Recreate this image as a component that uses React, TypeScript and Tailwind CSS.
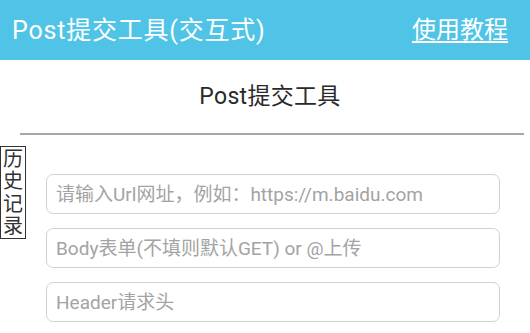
import React from 'react';

const fontStack = { fontFamily: 'Roboto, "Noto Sans CJK SC", sans-serif' };

export default function App() {
  const fields = [
    '请输入Url网址，例如：https://m.baidu.com',
    'Body表单(不填则默认GET) or @上传',
    'Header请求头',
  ];

  return (
    <div className="w-[530px] h-[333px] bg-white overflow-hidden" style={fontStack}>
      {/* top bar */}
      <div className="h-[60px] bg-[#4fc4e6] flex items-center justify-between pl-[12px] pr-[22px]">
        <span className="text-[25px] text-white tracking-[0.8px] leading-none">Post提交工具(交互式)</span>
        <span className="text-[24px] text-white underline underline-offset-[3px] leading-none">使用教程</span>
      </div>

      {/* subtitle */}
      <div className="h-[73px] flex items-center justify-center pl-[10px]">
        <span className="text-[23px] text-[#2a2a2a] tracking-[0.3px] leading-none">Post提交工具</span>
      </div>
      <div className="h-[2px] bg-[#a6a6a6] ml-[20px] mr-[6px]" />

      <div className="flex">
        <div className="mt-[11px] w-[26px] h-[93px] border border-[#333] flex flex-col items-center justify-center text-[20px] leading-[22.5px] text-[#333]">
          <span>历</span>
          <span>史</span>
          <span>记</span>
          <span>录</span>
        </div>
        <div className="ml-[20px] mt-[39px] flex flex-col gap-[14px]">
          {fields.map(f => (
            <input
              key={f}
              placeholder={f}
              className="w-[454px] h-[40px] border border-[#d2d2d2] rounded-[7px] px-[9px] text-[19px] placeholder:text-[#a3a3a3] outline-none"
              style={fontStack}
            />
          ))}
        </div>
      </div>
    </div>
  );
}
